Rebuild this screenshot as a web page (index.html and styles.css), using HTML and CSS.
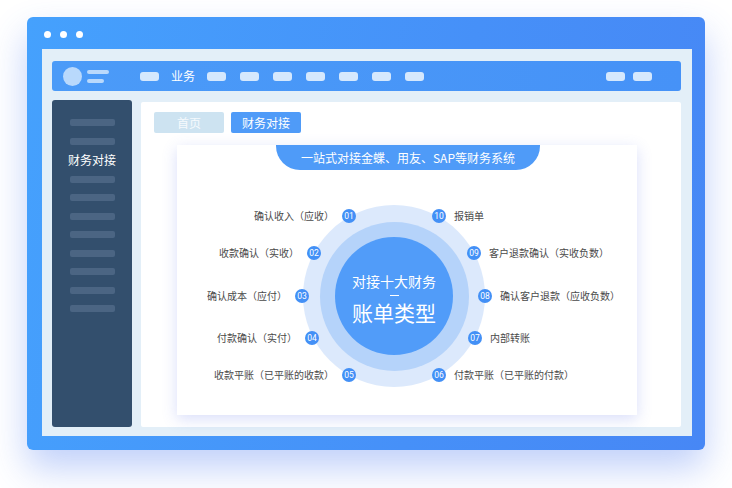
FILE: index.html
```html
<!DOCTYPE html>
<html lang="zh-CN">
<head>
    <meta charset="UTF-8">
    <title>财务对接</title>
    <link rel="stylesheet" href="styles.css">
</head>
<body>

    <div class="window">
        <div class="titlebar">
            <span class="dot"></span>
            <span class="dot"></span>
            <span class="dot"></span>
        </div>

        <div class="inner">
            <div class="navbar">
                <div class="logo"></div>
                <div class="logo-lines">
                    <span class="line-long"></span>
                    <span class="line-short"></span>
                </div>
                <div class="nav-links">
                    <span class="pill"></span>
                    <span class="nav-text">业务</span>
                    <span class="pill"></span>
                    <span class="pill"></span>
                    <span class="pill"></span>
                    <span class="pill"></span>
                    <span class="pill"></span>
                    <span class="pill"></span>
                    <span class="pill"></span>
                </div>
                <div class="nav-right">
                    <span class="pill"></span>
                    <span class="pill"></span>
                </div>
            </div>

            <div class="body">
                <aside class="sidebar">
                    <span class="side-bar"></span>
                    <span class="side-bar"></span>
                    <span class="side-title">财务对接</span>
                    <span class="side-bar"></span>
                    <span class="side-bar"></span>
                    <span class="side-bar"></span>
                    <span class="side-bar"></span>
                    <span class="side-bar"></span>
                    <span class="side-bar"></span>
                    <span class="side-bar"></span>
                    <span class="side-bar"></span>
                </aside>

                <main class="content">
                    <div class="tabs">
                        <span class="tab">首页</span>
                        <span class="tab active">财务对接</span>
                    </div>

                    <div class="card">
                        <div class="card-header">一站式对接金蝶、用友、SAP等财务系统</div>

                        <div class="diagram">
                            <div class="ring-outer">
                                <div class="ring-middle">
                                    <div class="ring-inner">
                                        <span class="ring-sub">对接十大财务</span>
                                        <span class="ring-dash"></span>
                                        <span class="ring-title">账单类型</span>
                                    </div>
                                </div>
                            </div>

                            <!-- left side -->
                            <div class="item left n01"><span class="label">确认收入（应收）</span><span class="badge">01</span></div>
                            <div class="item left n02"><span class="label">收款确认（实收）</span><span class="badge">02</span></div>
                            <div class="item left n03"><span class="label">确认成本（应付）</span><span class="badge">03</span></div>
                            <div class="item left n04"><span class="label">付款确认（实付）</span><span class="badge">04</span></div>
                            <div class="item left n05"><span class="label">收款平账（已平账的收款）</span><span class="badge">05</span></div>

                            <!-- right side -->
                            <div class="item right n10"><span class="badge">10</span><span class="label">报销单</span></div>
                            <div class="item right n09"><span class="badge">09</span><span class="label">客户退款确认（实收负数）</span></div>
                            <div class="item right n08"><span class="badge">08</span><span class="label">确认客户退款（应收负数）</span></div>
                            <div class="item right n07"><span class="badge">07</span><span class="label">内部转账</span></div>
                            <div class="item right n06"><span class="badge">06</span><span class="label">付款平账（已平账的付款）</span></div>
                        </div>
                    </div>
                </main>
            </div>
        </div>
    </div>

</body>
</html>
```

FILE: styles.css
```css
html, body {
    height: 100%;
}
body {
    margin: 0;
    padding-top: 17px;
    box-sizing: border-box;
    background-color: #fff;
    font-family: "Noto Sans CJK SC", "Noto Sans", sans-serif;
}
.window {
    width: 678px;
    height: 433px;
    margin-left: 27px;
    padding: 0 13px 14px 15px;
    box-sizing: border-box;
    display: flex;
    flex-direction: column;
    border-radius: 6px;
    background: linear-gradient(100deg, #45a1fd 0%, #4690f8 60%, #4787f5 100%);
    box-shadow: 0 18px 36px rgba(60, 110, 240, 0.32);
}
.titlebar {
    height: 32px;
    display: flex;
    align-items: center;
    gap: 9px;
    padding: 2px 0 0 2px;
    box-sizing: border-box;
}
.dot {
    width: 7px;
    height: 7px;
    border-radius: 50%;
    background-color: #fff;
}
.inner {
    flex: 1;
    display: flex;
    flex-direction: column;
    padding: 12px 11px 9px 10px;
    background-color: #e3eff8;
}

/* top navigation */
.navbar {
    height: 30px;
    display: flex;
    align-items: center;
    padding: 0 29px 0 11px;
    border-radius: 3px;
    background: linear-gradient(90deg, #4b9bf8, #4692f7);
}
.logo {
    width: 19px;
    height: 19px;
    border-radius: 50%;
    background-color: #b9d9fc;
    margin-right: 5px;
}
.logo-lines {
    display: flex;
    flex-direction: column;
    gap: 5px;
}
.logo-lines span {
    height: 4px;
    border-radius: 2px;
    background-color: #b9d9fc;
}
.line-long {
    width: 22px;
}
.line-short {
    width: 17px;
}
.nav-links {
    display: flex;
    align-items: center;
    gap: 14px;
    margin-left: 31px;
}
.pill {
    width: 19px;
    height: 9px;
    border-radius: 3px;
    background-color: #d5e8fd;
}
.nav-text {
    color: #fff;
    font-size: 12px;
    line-height: 16px;
    margin: 0 -2px 0 -2px;
}
.nav-right {
    display: flex;
    gap: 8px;
    margin-left: auto;
}

/* page body */
.body {
    flex: 1;
    display: flex;
    margin-top: 9px;
}
.sidebar {
    width: 80px;
    display: flex;
    flex-direction: column;
    align-items: center;
    gap: 11.5px;
    padding-top: 19px;
    box-sizing: border-box;
    border-radius: 3px;
    background-color: #334f6d;
}
.side-bar {
    width: 45px;
    height: 7px;
    border-radius: 2px;
    background-color: #4b6583;
}
.side-title {
    color: #fff;
    font-size: 12px;
    line-height: 18px;
    margin: -5px 0;
}
.content {
    flex: 1;
    margin: 2px 0 0 9px;
    padding: 10px 13px;
    border-radius: 2px;
    background-color: #fff;
}
.tabs {
    display: flex;
    gap: 7px;
}
.tab {
    width: 70px;
    height: 21px;
    line-height: 21px;
    text-align: center;
    font-size: 12px;
    color: #f6fafd;
    border-radius: 2px;
    background-color: #cde3f1;
}
.tab.active {
    color: #fff;
    background-color: #4f9bf8;
}

/* card with the diagram */
.card {
    width: 460px;
    height: 270px;
    margin: 12px 0 0 23px;
    display: flex;
    flex-direction: column;
    background-color: #fff;
    box-shadow: 0 4px 14px rgba(80, 105, 230, 0.22);
}
.card-header {
    align-self: center;
    width: 264px;
    height: 25px;
    line-height: 25px;
    margin-left: 2px;
    text-align: center;
    color: #fff;
    font-size: 12px;
    border-radius: 0 0 24px 24px;
    background-color: #4f9bf8;
}
.diagram {
    position: relative;
    flex: 1;
}
.ring-outer,
.ring-middle,
.ring-inner {
    display: flex;
    align-items: center;
    justify-content: center;
    border-radius: 50%;
}
.ring-outer {
    width: 182px;
    height: 182px;
    margin: 35px 0 0 126px;
    background-color: #dce9fc;
}
.ring-middle {
    width: 149px;
    height: 149px;
    background-color: #b5d3fa;
}
.ring-inner {
    width: 118px;
    height: 118px;
    flex-direction: column;
    padding-top: 5px;
    box-sizing: border-box;
    color: #fff;
    background-color: #519cf9;
}
.ring-sub {
    font-size: 14px;
    line-height: 17px;
}
.ring-dash {
    width: 9px;
    height: 1.5px;
    margin: 5px 0 4px;
    background-color: #fff;
}
.ring-title {
    font-size: 21px;
    line-height: 24px;
}

/* numbered nodes round the ring */
.item {
    position: absolute;
    display: flex;
    align-items: center;
    gap: 8px;
    white-space: nowrap;
}
.label {
    font-size: 10px;
    line-height: 14px;
    color: #4a4a4a;
}
.badge {
    width: 14px;
    height: 14px;
    border-radius: 50%;
    text-align: center;
    line-height: 14px;
    font-family: Roboto, "Noto Sans", sans-serif;
    font-size: 8.5px;
    color: #fff;
    background-color: #4390f6;
}
.n01 { top: 39px; right: 281px; }
.n02 { top: 76px; right: 316px; }
.n03 { top: 119px; right: 328px; }
.n04 { top: 161px; right: 318px; }
.n05 { top: 198px; right: 281px; }
.n10 { top: 39px; left: 255px; }
.n09 { top: 76px; left: 290px; }
.n08 { top: 119px; left: 301px; }
.n07 { top: 161px; left: 291px; }
.n06 { top: 198px; left: 255px; }
```
